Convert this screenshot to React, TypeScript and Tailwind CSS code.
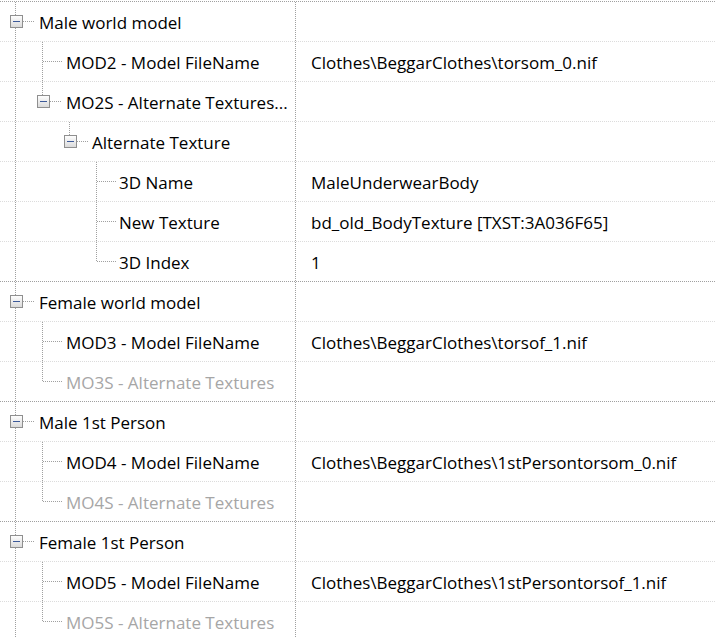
import React from "react";

type Row = {
  label: string;
  value?: string;
  textX: number;
  full: number[];
  half?: number;
  box?: number;
  h: [number, number];
  disabled?: boolean;
  groupEnd?: boolean;
};

const rows: Row[] = [
  { label: "Male world model", textX: 39, full: [15], box: 10, h: [23, 33] },
  { label: "MOD2 - Model FileName", value: "Clothes\\BeggarClothes\\torsom_0.nif", textX: 66, full: [15, 42], h: [43, 61] },
  { label: "MO2S - Alternate Textures...", textX: 66, full: [15], half: 42, box: 37, h: [50, 61] },
  { label: "Alternate Texture", textX: 92, full: [15], half: 69, box: 64, h: [77, 88] },
  { label: "3D Name", value: "MaleUnderwearBody", textX: 119, full: [15, 96], h: [97, 115] },
  { label: "New Texture", value: "bd_old_BodyTexture [TXST:3A036F65]", textX: 119, full: [15, 96], h: [97, 115] },
  { label: "3D Index", value: "1", textX: 119, full: [15], half: 96, h: [97, 115], groupEnd: true },
  { label: "Female world model", textX: 39, full: [15], box: 10, h: [23, 33] },
  { label: "MOD3 - Model FileName", value: "Clothes\\BeggarClothes\\torsof_1.nif", textX: 66, full: [15, 42], h: [43, 61] },
  { label: "MO3S - Alternate Textures", textX: 66, full: [15], half: 42, h: [43, 61], disabled: true, groupEnd: true },
  { label: "Male 1st Person", textX: 39, full: [15], box: 10, h: [23, 33] },
  { label: "MOD4 - Model FileName", value: "Clothes\\BeggarClothes\\1stPersontorsom_0.nif", textX: 66, full: [15, 42], h: [43, 61] },
  { label: "MO4S - Alternate Textures", textX: 66, full: [15], half: 42, h: [43, 61], disabled: true, groupEnd: true },
  { label: "Female 1st Person", textX: 39, full: [15], box: 10, h: [23, 33] },
  { label: "MOD5 - Model FileName", value: "Clothes\\BeggarClothes\\1stPersontorsof_1.nif", textX: 66, full: [15, 42], h: [43, 61] },
  { label: "MO5S - Alternate Textures", textX: 66, full: [15], half: 42, h: [43, 61], disabled: true, groupEnd: true },
];

const LINE = "#a0a0a0";
const CY = 19;

function Connectors({ r }: { r: Row }) {
  const w = r.textX;
  return (
    <svg width={w} height={39} className="shrink-0 block" shapeRendering="crispEdges">
      <defs>
        <linearGradient id="boxg" x1="0" y1="0" x2="0" y2="1">
          <stop offset="0" stopColor="#ffffff" />
          <stop offset="1" stopColor="#d9d9d9" />
        </linearGradient>
      </defs>
      {r.full.map((x) => (
        <line key={x} x1={x + 0.5} y1={0} x2={x + 0.5} y2={39} stroke={LINE} strokeDasharray="1 1" />
      ))}
      {r.half !== undefined && (
        <line x1={r.half + 0.5} y1={0} x2={r.half + 0.5} y2={r.box !== undefined ? 13 : CY + 1} stroke={LINE} strokeDasharray="1 1" />
      )}
      <line x1={r.h[0]} y1={CY + 0.5} x2={r.h[1] + 1} y2={CY + 0.5} stroke={LINE} strokeDasharray="1 1" />
      {r.box !== undefined && (
        <g>
          <rect x={r.box + 0.5} y={13.5} width={12} height={12} fill="url(#boxg)" stroke="#8f8f8f" />
          <line x1={r.box + 3} y1={CY + 0.5} x2={r.box + 10} y2={CY + 0.5} stroke="#3d5a99" strokeWidth={1} />
        </g>
      )}
    </svg>
  );
}

export default function App() {
  return (
    <div
      className="w-[715px] h-[638px] overflow-hidden bg-white pt-px"
      style={{ fontFamily: "'Open Sans', 'Noto Sans', sans-serif" }}
    >
      <div className="border-t border-dotted border-[#a0a0a0]">
        {rows.map((r, i) => (
          <div
            key={i}
            className={
              "flex h-10 border-b border-dotted " +
              (r.groupEnd ? "border-[#a0a0a0]" : "border-[#dcdcdc]")
            }
          >
            <div className="flex items-center w-[296px] shrink-0 border-r border-dotted border-[#a0a0a0] overflow-hidden">
              <Connectors r={r} />
              <span
                className={
                  "text-[17px] whitespace-nowrap leading-none pt-[2px] " +
                  (r.disabled ? "text-[#a6a6a6]" : "text-black")
                }
              >
                {r.label}
              </span>
            </div>
            <div className="flex items-center pl-[15px] text-[17px] text-black whitespace-nowrap leading-none pt-[2px]">
              {r.value ?? ""}
            </div>
          </div>
        ))}
      </div>
    </div>
  );
}
